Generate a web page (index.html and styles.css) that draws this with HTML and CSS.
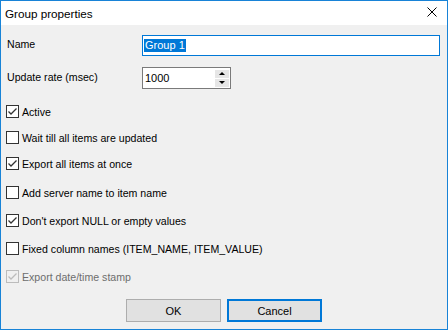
FILE: index.html
```html
<!DOCTYPE html>
<html lang="en">

<head>
    <meta charset="UTF-8">
    <meta name="viewport" content="width=device-width, initial-scale=1.0">
    <title>Group properties</title>
    <link rel="stylesheet" href="styles.css">
</head>

<body>
    <main class="dialog">
        <header class="titleBar">
            <span class="titleText">Group properties</span>
            <span class="closeButton">
                <svg width="10" height="10" viewBox="0 0 10 10">
                    <path d="M0.5 0.5 L9.5 9.5 M9.5 0.5 L0.5 9.5" stroke="#000" stroke-width="1" fill="none" />
                </svg>
            </span>
        </header>
        <section class="dialogBody">
            <div class="fieldRow">
                <label for="name">Name</label>
                <div class="textBox nameBox"><span class="selected">Group 1</span></div>
            </div>
            <div class="fieldRow">
                <label for="rate">Update rate (msec)</label>
                <div class="textBox rateBox">
                    <span>1000</span>
                    <div class="spinner">
                        <span class="spinUp"></span>
                        <span class="spinDown"></span>
                    </div>
                </div>
            </div>
            <div class="checkList">
                <div class="checkRow">
                    <span class="checkBox checked"><svg width="11" height="11" viewBox="0 0 11 11"><path d="M1.5 5.5 L4 8 L9.5 2.5" /></svg></span>
                    <span>Active</span>
                </div>
                <div class="checkRow">
                    <span class="checkBox"></span>
                    <span>Wait till all items are updated</span>
                </div>
                <div class="checkRow">
                    <span class="checkBox checked"><svg width="11" height="11" viewBox="0 0 11 11"><path d="M1.5 5.5 L4 8 L9.5 2.5" /></svg></span>
                    <span>Export all items at once</span>
                </div>
                <div class="checkRow spaced first">
                    <span class="checkBox"></span>
                    <span>Add server name to item name</span>
                </div>
                <div class="checkRow spaced">
                    <span class="checkBox checked"><svg width="11" height="11" viewBox="0 0 11 11"><path d="M1.5 5.5 L4 8 L9.5 2.5" /></svg></span>
                    <span>Don't export NULL or empty values</span>
                </div>
                <div class="checkRow spaced">
                    <span class="checkBox"></span>
                    <span>Fixed column names (ITEM_NAME, ITEM_VALUE)</span>
                </div>
                <div class="checkRow spaced disabled">
                    <span class="checkBox checked"><svg width="11" height="11" viewBox="0 0 11 11"><path d="M1.5 5.5 L4 8 L9.5 2.5" /></svg></span>
                    <span>Export date/time stamp</span>
                </div>
            </div>
            <div class="buttonRow">
                <button class="dialogButton">OK</button>
                <button class="dialogButton default">Cancel</button>
            </div>
        </section>
    </main>
</body>

</html>
```

FILE: styles.css
```css
* {
    box-sizing: border-box;
    font-family: 'Liberation Sans', Arial, sans-serif;
}

body {
    margin: 0;
    background-color: #f0f0f0;
}

.dialog {
    width: 448px;
    height: 330px;
    border: 1px solid #1883d7;
    background-color: #f0f0f0;
    display: flex;
    flex-direction: column;
}

.titleBar {
    height: 24px;
    flex-shrink: 0;
    background-color: #fff;
    display: flex;
    align-items: center;
    justify-content: space-between;
    padding: 0 10px 0 4px;
}

.titleText {
    font-size: 11.7px;
    color: #000;
}

.closeButton {
    display: flex;
    margin-top: -2px;
}

.dialogBody {
    flex: 1;
    display: flex;
    flex-direction: column;
    padding: 10px 7px 0 5px;
    font-size: 10.6px;
    color: #000;
}

.fieldRow {
    display: grid;
    grid-template-columns: 136px 1fr;
    align-items: center;
    margin-bottom: 11px;
}

.fieldRow label {
    padding-left: 1px;
    margin-top: -3px;
}

.textBox {
    height: 21px;
    background-color: #fff;
    border: 1px solid #7a7a7a;
    display: flex;
    align-items: center;
    padding-left: 1px;
    font-size: 11px;
}

.nameBox {
    width: 298px;
    border-color: #0078d7;
}

.selected {
    background-color: #0078d7;
    color: #fff;
    padding: 0 1px;
    line-height: 13px;
}

.rateBox {
    width: 89px;
    height: 22px;
    justify-content: space-between;
    padding: 0 1px 0 2px;
}

.spinner {
    width: 14px;
    height: 17px;
    display: flex;
    flex-direction: column;
    gap: 1px;
}

.spinner span {
    flex: 1;
    background-color: #e6e6e6;
    display: flex;
    justify-content: center;
    align-items: center;
}

.spinUp::before {
    content: "";
    border-left: 3px solid transparent;
    border-right: 3px solid transparent;
    border-bottom: 3px solid #000;
}

.spinDown::before {
    content: "";
    border-left: 3px solid transparent;
    border-right: 3px solid transparent;
    border-top: 3px solid #000;
}

.checkList {
    display: flex;
    flex-direction: column;
    gap: 13px;
    margin-top: 5px;
}

.checkRow {
    display: flex;
    align-items: center;
    gap: 3px;
    height: 13px;
}

.checkRow.spaced {
    margin-top: 2px;
}

.checkRow.first {
    margin-top: 3px;
}

.checkBox {
    width: 13px;
    height: 13px;
    border: 1px solid #333;
    background-color: #fff;
    display: flex;
    flex-shrink: 0;
}

.checkBox path {
    fill: none;
    stroke: #333;
    stroke-width: 1.3;
}

.disabled {
    color: #6d6d6d;
}

.disabled .checkBox {
    border-color: #bcbcbc;
    background-color: #f0f0f0;
}

.disabled .checkBox path {
    stroke: #bcbcbc;
}

.buttonRow {
    display: flex;
    justify-content: center;
    gap: 6px;
    margin-top: 16px;
    padding-left: 2px;
}

.dialogButton {
    width: 95px;
    height: 23px;
    background-color: #e1e1e1;
    border: 1px solid #adadad;
    font-size: 11px;
    color: #000;
    padding: 0;
}

.dialogButton.default {
    border: 2px solid #0078d7;
}
```
